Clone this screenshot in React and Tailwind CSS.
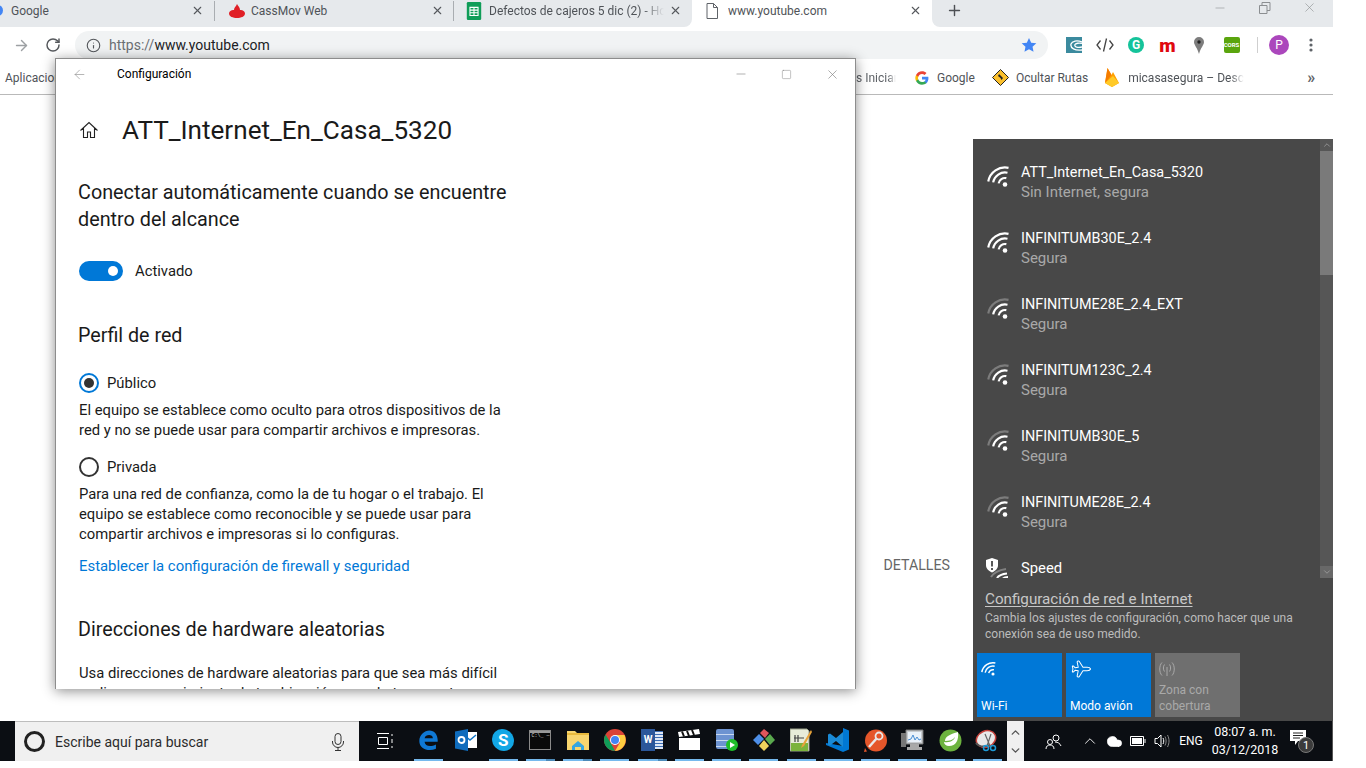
import { ArrowLeft, ChevronDown, ChevronUp, Cloud, Info, Minus, Plane, Plus, RotateCw, Square, X } from 'lucide-react';

const networks = [
  { name: 'ATT_Internet_En_Casa_5320', sub: 'Sin Internet, segura', weak: false },
  { name: 'INFINITUMB30E_2.4', sub: 'Segura', weak: false },
  { name: 'INFINITUME28E_2.4_EXT', sub: 'Segura', weak: true },
  { name: 'INFINITUM123C_2.4', sub: 'Segura', weak: true },
  { name: 'INFINITUMB30E_5', sub: 'Segura', weak: true },
  { name: 'INFINITUME28E_2.4', sub: 'Segura', weak: true },
];

function arc(r, cx, cy) {
  const a0 = (190 * Math.PI) / 180;
  const a1 = (282 * Math.PI) / 180;
  const p = (a) => `${(cx + r * Math.cos(a)).toFixed(2)} ${(cy + r * Math.sin(a)).toFixed(2)}`;
  return `M${p(a0)} A${r} ${r} 0 0 1 ${p(a1)}`;
}

function WifiIcon({ weak, size = 24 }) {
  return (
    <svg width={size} height={size} viewBox="0 0 24 24" fill="none" strokeWidth="2.200" stroke="#fff" className="shrink-0">
      <circle cx="18" cy="19.5" r="2.300" fill="#fff" stroke="none" />
      <path d={arc(6.5, 18, 19.5)} />
      <path d={arc(12, 18, 19.5)} />
      <path d={arc(17, 18, 19.5)} stroke={weak ? '#7c7c7c' : '#fff'} />
    </svg>
  );
}

function SpeedIcon() {
  return (
    <svg width="26" height="24" viewBox="0 0 26 24" fill="none" className="shrink-0">
      <path d="M2 4 L8 2 L14 4 V9 C14 13 11 15 8 16.5 C5 15 2 13 2 9 Z" fill="#fff" />
      <path d="M8 5v5.5M8 12v2" stroke="#484848" strokeWidth="1.8" />
      <path d="M7 21 C10 16 15 14 22 13" stroke="#808080" strokeWidth="2" />
      <path d="M13 22 C15 19 18 18 23 17.5" stroke="#fff" strokeWidth="2" />
      <path d="M19 22.5 C20 21.5 21.5 21 24 21" stroke="#fff" strokeWidth="2" />
    </svg>
  );
}

function ChromeTab({ w, icon, text, close, pl = 14, fade }) {
  return (
    <div className="flex h-full shrink-0 items-center pb-[6px]" style={{ width: w, paddingLeft: pl }}>
      {icon}
      <span className={`min-w-0 flex-1 overflow-hidden whitespace-nowrap text-[12px] text-[#4f5358] ${fade ? 'mr-[5px] [mask-image:linear-gradient(to_right,black_88%,transparent)]' : ''}`}>{text}</span>
      <X size={13} strokeWidth={2} className="shrink-0 text-[#55585c]" style={{ marginRight: close }} />
    </div>
  );
}

function Santander() {
  return (
    <svg width="16" height="14" viewBox="0 0 16 14" className="mr-[6px] shrink-0">
      <path d="M8 0c1 2 3 3.500 3 6 2-.5 5 1 5 3.500 0 3-4 4.500-8 4.500S0 12.500 0 9.500C0 7 3 5.500 5 6c0-2.500 2-3.500 3-6z" fill="#e01f26" />
    </svg>
  );
}

function Sheets() {
  return (
    <svg width="16" height="18" viewBox="0 0 16 20" className="mr-[7px] shrink-0">
      <rect width="16" height="20" rx="1.500" fill="#0f9d58" />
      <path d="M3.500 6h9v9h-9zM3.500 9h9M3.500 12h9M8 6v9" fill="none" stroke="#fff" strokeWidth="1.200" />
    </svg>
  );
}

function PageIcon() {
  return (
    <svg width="12" height="16" viewBox="0 0 12 16" fill="none" stroke="#5f6368" className="mr-[10px] shrink-0">
      <path d="M1 .5h6.500l4 4v11h-10.500zM7.500.5v4h4" />
    </svg>
  );
}

function ExtIcons() {
  return (
    <div className="ml-[10px] flex items-center">
      <div className="flex w-[31px] justify-center">
        <svg width="16" height="16" viewBox="0 0 16 16">
          <rect width="16" height="16" fill="#3b8a9e" />
          <path d="M16 13C9 14 4 11 5 7c1-3 6-4 11-2M16 10C12 11 8 10 9 7.500c.5-1 4-2 7-1" fill="none" stroke="#fff" strokeWidth="1.300" />
        </svg>
      </div>
      <div className="flex w-[31px] justify-center">
        <svg width="18" height="16" viewBox="0 0 18 16" fill="none" stroke="#444" strokeWidth="1.300">
          <path d="M4.500 3.500 1 8l3.500 4.500M13.500 3.500 17 8l-3.500 4.500M10.500 1.500l-3 13" />
        </svg>
      </div>
      <div className="flex w-[32px] justify-center">
        <span className="flex h-[16px] w-[16px] items-center justify-center rounded-full bg-[#15c39a] text-[12px] font-bold leading-none text-white">G</span>
      </div>
      <div className="flex w-[31px] justify-center">
        <span className="text-[19px] font-black leading-none text-[#e0090f]">m</span>
      </div>
      <div className="flex w-[32px] justify-center">
        <svg width="10" height="17" viewBox="0 0 10 17">
          <path d="M5 0a5 5 0 0 1 5 5c0 3-3.500 6-5 12C3.500 11 0 8 0 5a5 5 0 0 1 5-5z" fill="#7d7d7d" />
          <circle cx="5" cy="5" r="1.700" fill="#222" />
        </svg>
      </div>
      <div className="flex w-[33px] justify-center">
        <span className="flex h-[16px] w-[16px] items-center justify-center rounded-[2px] bg-[#5aa50d] text-[6px] font-bold leading-none text-white">CORS</span>
      </div>
      <div className="ml-[9px] h-[16px] w-px bg-[#cfcfcf]" />
      <span className="ml-[11px] flex h-[20px] w-[20px] items-center justify-center rounded-full bg-[#ab47bc] text-[12px] leading-none text-white">P</span>
      <svg width="4" height="14" viewBox="0 0 4 14" fill="#5f6368" className="ml-[20px]">
        <circle cx="2" cy="2" r="1.600" />
        <circle cx="2" cy="7" r="1.600" />
        <circle cx="2" cy="12" r="1.600" />
      </svg>
    </div>
  );
}

function GoogleG() {
  return (
    <svg width="14" height="14" viewBox="0 0 48 48" className="mr-[8px] shrink-0">
      <path fill="#4285F4" d="M46 24.500c0-1.600-.1-3.100-.4-4.500H24v9h12.400c-.5 2.900-2.100 5.300-4.600 7v5.800h7.400C43.600 37.700 46 31.700 46 24.500z" />
      <path fill="#34A853" d="M24 47c6.200 0 11.400-2 15.200-5.500L31.800 35.700c-2 1.400-4.700 2.200-7.800 2.200-6 0-11.100-4-12.900-9.500H3.500v6C7.300 42 15 47 24 47z" />
      <path fill="#FBBC05" d="M11.100 28.400c-.5-1.400-.7-2.900-.7-4.400s.3-3 .7-4.400v-6H3.500C2 16.600 1 20.200 1 24s1 7.400 2.500 10.400z" />
      <path fill="#EA4335" d="M24 10.100c3.400 0 6.400 1.200 8.800 3.400l6.600-6.600C35.400 3.300 30.200 1 24 1 15 1 7.300 6 3.500 13.600l7.600 6c1.800-5.500 6.900-9.500 12.900-9.500z" />
    </svg>
  );
}

function Bookmarks() {
  return (
    <div className="flex h-[34px] items-center border-b border-[#b9b9b9] text-[12px] text-[#4f5358]">
      <span className="w-[856px] shrink-0 pl-[5px]">Aplicaciones</span>
      <span className="w-[40px] shrink-0 overflow-hidden whitespace-nowrap text-[#5f6368] [mask-image:linear-gradient(to_right,black_80%,transparent)]">s Iniciar</span>
      <div className="ml-[19px] flex items-center">
        <GoogleG />
        <span>Google</span>
      </div>
      <div className="ml-[17px] flex items-center">
        <svg width="17" height="17" viewBox="0 0 17 17" className="mr-[7px] shrink-0">
          <path d="M8.500.5l8 8-8 8-8-8z" fill="#fbc02d" stroke="#222" />
          <path d="M7 5l4 4-1.500 2-1-2L6 7z" fill="#222" />
        </svg>
        <span>Ocultar Rutas</span>
      </div>
      <div className="ml-[17px] flex items-center">
        <svg width="14" height="19" viewBox="0 0 14 19" className="mr-[9px] shrink-0">
          <path d="M0 15 2.500 0l4 7L8 4l6 11-7 4z" fill="#ffa000" />
          <path d="M0 15 2.500 0l4 7z" fill="#f57c00" />
          <path d="M14 15l-7 4-7-4 8-7z" fill="#ffca28" />
        </svg>
        <span className="w-[116px] overflow-hidden whitespace-nowrap [mask-image:linear-gradient(to_right,black_88%,transparent)]">micasasegura – Descripción</span>
      </div>
      <span className="ml-[63px] text-[16px] font-bold leading-none text-[#5f6368]">»</span>
    </div>
  );
}

function Browser() {
  return (
    <div className="w-[1333px]">
      <div className="flex h-[27px] bg-white">
        <div className="relative flex h-full rounded-br-[8px] bg-[#e6e9ec]">
          <span className="absolute left-[-8px] top-[5px] h-[11px] w-[11px] rounded-full bg-[#4285f4]" />
          <ChromeTab w={214} pl={11} text="Google" close={10} />
          <div className="mb-[6px] mt-[1px] w-px bg-[#a9adb1]" />
          <ChromeTab w={238} icon={<Santander />} text="CassMov Web" close={9} />
          <div className="mb-[6px] mt-[1px] w-px bg-[#a9adb1]" />
          <ChromeTab w={238} pl={12} icon={<Sheets />} text="Defectos de cajeros 5 dic (2) - Hoja" close={10} fade />
        </div>
        <ChromeTab w={240} icon={<PageIcon />} text="www.youtube.com" close={10} />
        <div className="flex flex-1 items-center rounded-bl-[8px] bg-[#e6e9ec]">
          <Plus size={17} strokeWidth={2} className="mb-[6px] ml-[14px] text-[#4d5054]" />
          <div className="mb-[12px] ml-[250px] flex items-center text-[#8b8e91]">
            <Minus size={14} strokeWidth={1} />
            <svg width="12" height="12" viewBox="0 0 12 12" fill="none" stroke="#8b8e91" className="ml-[32px]">
              <path d="M.5 3.500h7.500v8h-7.500zM3 3.500V.500h8v8h-3" />
            </svg>
            <X size={15} strokeWidth={1} className="ml-[31px]" />
          </div>
        </div>
      </div>

      <div className="flex h-[34px] items-center bg-white pt-[2px]">
        <ArrowLeft size={17} strokeWidth={2} className="ml-[13px] rotate-180 text-[#9da0a3]" />
        <RotateCw size={16} strokeWidth={2.200} className="ml-[15px] text-[#55585c]" />
        <div className="ml-[14px] flex h-[28px] w-[973px] items-center rounded-full bg-[#f1f3f4]">
          <Info size={15} strokeWidth={1.800} className="ml-[11px] text-[#55585c]" />
          <span className="ml-[8px] flex-1 text-[14px] text-[#202124]"><span className="text-[#6b6f73]">https://</span>www.youtube.com</span>
          <svg width="16" height="16" viewBox="0 0 24 24" fill="#4285f4" className="mr-[11px]">
            <path d="M12 1.500l3.300 7 7.700.9-5.700 5.200 1.500 7.600L12 18.400l-6.800 3.800 1.500-7.600L1 9.400l7.700-.9z" />
          </svg>
        </div>
        <ExtIcons />
      </div>

      <Bookmarks />
    </div>
  );
}

function HomeIcon() {
  return (
    <svg width="20" height="20" viewBox="0 0 20 20" fill="none" stroke="#222" strokeWidth="1.100" className="shrink-0">
      <path d="M1.500 10.500 10 2.500l8.500 8M4.500 8v9.500h4v-5.500h3v5.500h4V8" />
    </svg>
  );
}

function Radio({ on }) {
  return (
    <span className={`flex h-[20px] w-[20px] items-center justify-center rounded-full border-2 ${on ? 'border-[#0078d7]' : 'border-[#333]'}`}>
      {on && <span className="h-[10px] w-[10px] rounded-full bg-[#333]" />}
    </span>
  );
}

function SettingsWindow() {
  return (
    <div className="absolute left-[55px] top-[58px] h-[631px] w-[801px] overflow-hidden border border-b-0 border-[#8d8d8d] bg-white text-[#1a1a1a] shadow-[0_2px_12px_rgba(0,0,0,0.45)]">
      <div className="flex h-[30px] items-center text-[12px]">
        <ArrowLeft size={15} strokeWidth={1} className="ml-[16px] text-[#8a8a8a]" />
        <span className="ml-[30px] text-black">Configuración</span>
        <div className="ml-auto flex items-center text-[#7a7a7a]">
          <Minus size={14} strokeWidth={1} />
          <Square size={11} strokeWidth={1} className="ml-[33px]" />
          <X size={15} strokeWidth={1} className="ml-[33px] mr-[15px]" />
        </div>
      </div>

      <div className="ml-[23px] mt-[23px] flex h-[36px] items-center">
        <HomeIcon />
        <h1 className="ml-[23px] text-[26.100px] leading-[36px] text-[#1a1a1a]">ATT_Internet_En_Casa_5320</h1>
      </div>

      <h2 className="ml-[22px] mt-[31px] w-[450px] text-[19.800px] leading-[27px]">Conectar automáticamente cuando se encuentre dentro del alcance</h2>

      <div className="ml-[23px] mt-[28px] flex h-[20px] items-center">
        <span className="flex h-[20px] w-[44px] items-center justify-end rounded-full bg-[#0078d7] pr-[5px]">
          <span className="h-[10px] w-[10px] rounded-full bg-white" />
        </span>
        <span className="ml-[12px] pt-[1px] text-[14.800px]">Activado</span>
      </div>

      <h2 className="ml-[22px] mt-[41px] text-[19.700px] leading-[27px]">Perfil de red</h2>

      <div className="ml-[23px] mt-[24px] flex h-[20px] items-center">
        <Radio on />
        <span className="ml-[8px] pt-[1px] text-[14.800px]">Público</span>
      </div>
      <p className="ml-[23px] mt-[7px] w-[440px] text-[14.800px] leading-[20px]">El equipo se establece como oculto para otros dispositivos de la red y no se puede usar para compartir archivos e impresoras.</p>

      <div className="ml-[23px] mt-[17px] flex h-[20px] items-center">
        <Radio />
        <span className="ml-[8px] pt-[1px] text-[14.800px]">Privada</span>
      </div>
      <p className="ml-[23px] mt-[7px] w-[440px] text-[14.800px] leading-[20px]">Para una red de confianza, como la de tu hogar o el trabajo. El equipo se establece como reconocible y se puede usar para compartir archivos e impresoras si lo configuras.</p>

      <p className="ml-[23px] mt-[12px] text-[14.900px] leading-[20px] text-[#0078d7]">Establecer la configuración de firewall y seguridad</p>

      <h2 className="ml-[22px] mt-[40px] text-[19.700px] leading-[27px]">Direcciones de hardware aleatorias</h2>

      <p className="ml-[23px] mt-[20px] w-[440px] text-[14.800px] leading-[20px]">Usa direcciones de hardware aleatorias para que sea más difícil realizar un seguimiento de tu ubicación cuando te conectas a diferentes redes Wi-Fi.</p>
    </div>
  );
}

function Tile({ label, icon, off }) {
  return (
    <div className={`flex h-[64px] w-[85px] flex-col px-[4px] pb-[3px] pt-[6px] ${off ? 'bg-[#6f6f6f] text-[#a9a9a9]' : 'bg-[#0078d7] text-white'}`}>
      <div className="flex h-[20px] items-center">{icon}</div>
      <span className="mt-auto text-[12px] leading-[16px]">{label}</span>
    </div>
  );
}

function NetworkFlyout() {
  return (
    <div className="absolute left-[973px] top-[139px] flex h-[582px] w-[360px] flex-col bg-[#484848] text-white">
      <div className="flex h-[439px] shrink-0 overflow-hidden">
        <div className="flex-1 pt-[10px]">
          {networks.map((n) => (
            <div key={n.name} className="flex h-[66px] pl-[14px] pt-[13px]">
              <div className="mr-[10px] pt-[3px]"><WifiIcon weak={n.weak} /></div>
              <div>
                <p className="h-[20px] text-[14.400px] leading-[22px]">{n.name}</p>
                <p className="text-[15px] leading-[20px] text-[#a8a8a8]">{n.sub}</p>
              </div>
            </div>
          ))}
          <div className="flex h-[66px] pl-[11px] pt-[11px]">
            <div className="mr-[11px]"><SpeedIcon /></div>
            <p className="pt-[2px] text-[14.800px] leading-[20px]">Speed</p>
          </div>
        </div>
        <div className="flex w-[13px] shrink-0 flex-col bg-[#565656]">
          <div className="flex h-[12px] items-center justify-center"><ChevronUp size={10} strokeWidth={1.500} className="text-[#b0b0b0]" /></div>
          <div className="h-[124px] bg-[#7a7a7a]" />
          <div className="mt-auto flex h-[12px] items-center justify-center bg-[#686868]"><ChevronDown size={10} strokeWidth={1.500} className="text-[#b0b0b0]" /></div>
        </div>
      </div>

      <p className="ml-[12px] mt-[11px] text-[15.200px] leading-[20px] text-[#c8c8c8] underline underline-offset-2">Configuración de red e Internet</p>
      <p className="ml-[12px] mt-[1px] w-[330px] text-[12px] leading-[16px] text-[#bcbcbc]">Cambia los ajustes de configuración, como hacer que una conexión sea de uso medido.</p>

      <div className="ml-[4px] mt-[11px] flex gap-[4px]">
        <Tile label="Wi-Fi" icon={<WifiIcon size={16} />} />
        <Tile
          label="Modo avión"
          icon={<Plane size={20} strokeWidth={1.200} className="rotate-45" />}
        />
        <Tile
          off
          label={<>Zona con<br />cobertura</>}
          icon={
            <svg width="16" height="14" viewBox="0 0 16 14" fill="none" stroke="#a9a9a9">
              <path d="M8 5v9M5.500 2.500c-1.500 2-1.500 5 0 7M10.500 2.500c1.500 2 1.500 5 0 7M3 .5c-3 3-3 10 0 13M13 .5c3 3 3 10 0 13" />
            </svg>
          }
        />
      </div>
    </div>
  );
}

const taskIcons = [
  {
    bar: true,
    svg: (
      <svg width="21" height="22" viewBox="0 0 24 24">
        <path fillRule="evenodd" d="M22.500 14H7.500c.3 5 7 6.500 13 3v5c-9 3.500-19 0-19-9C1.500 6 7.500 1 13 1c6 0 10 5 9.500 13zM7.500 10H17c0-5-8.500-5-9.500 0z" fill="#0f78d4" />
      </svg>
    ),
  },
  {
    svg: (
      <div className="relative h-[22px] w-[22px]">
        <div className="absolute inset-y-[3px] right-0 w-[14px] bg-white" />
        <svg width="22" height="22" viewBox="0 0 22 22" className="absolute inset-0">
          <path d="M9 6l6 5 6-5" fill="none" stroke="#1075c8" strokeWidth="1.500" />
          <path d="M0 2.500 13 0v22L0 19.500z" fill="#0f6cbd" />
          <circle cx="6.500" cy="11" r="3" fill="none" stroke="#fff" strokeWidth="1.800" />
        </svg>
      </div>
    ),
  },
  {
    bar: true,
    svg: (
      <span className="flex h-[22px] w-[22px] items-center justify-center rounded-[45%_55%_45%_55%] bg-[#12a7e6] text-[17px] font-bold leading-none text-white">S</span>
    ),
  },
  {
    bar: true,
    split: true,
    svg: (
      <div className="h-[20px] w-[22px] border border-[#8a8a8a] bg-[#0a0a0a]">
        <div className="h-[2px] bg-[#9a9a9a]" />
        <p className="pl-[1px] font-[Liberation_Mono,monospace] text-[5px] leading-[7px] text-[#ddd]">C:\_ —</p>
      </div>
    ),
  },
  {
    bar: true,
    split: true,
    svg: (
      <svg width="22" height="20" viewBox="0 0 22 20">
        <path d="M0 1h8l2 2h12v17H0z" fill="#f8d56e" />
        <path d="M0 3h22v2H0z" fill="#e8b93d" />
        <path d="M5 16l6-5 6 5v4h-3v-3H8v3H5z" fill="#35a5e0" />
      </svg>
    ),
  },
  {
    bar: true,
    svg: (
      <svg width="22" height="22" viewBox="0 0 22 22">
        <circle cx="11" cy="11" r="11" fill="#db4437" />
        <path d="M11 22A11 11 0 0 1 1.500 5.500L7 14.500z" fill="#0f9d58" />
        <path d="M11 6h9.500A11 11 0 0 1 11 22l5-8.500z" fill="#ffcd40" />
        <circle cx="11" cy="11" r="5" fill="#fff" />
        <circle cx="11" cy="11" r="4" fill="#4285f4" />
      </svg>
    ),
  },
  {
    bar: true,
    split: true,
    svg: (
      <div className="relative h-[22px] w-[22px]">
        <div className="absolute inset-y-[2px] right-0 w-[14px] bg-[#dfe8f5] [background-image:repeating-linear-gradient(to_bottom,#3b6cb4_0_1px,transparent_1px_3px)]" />
        <div className="absolute inset-y-0 left-0 flex w-[14px] items-center justify-center bg-[#2b579a] text-[10px] font-bold leading-none text-white">W</div>
      </div>
    ),
  },
  {
    bar: true,
    svg: (
      <svg width="22" height="22" viewBox="0 0 22 22">
        <path d="M1 9h21v12H1z" fill="#fff" />
        <path d="M0 3l21-3 1 5L1 8z" fill="#fff" />
        <path d="M4 2.500l2 5M9 2l2 5M14 1l2 5" stroke="#111" strokeWidth="2" />
      </svg>
    ),
  },
  {
    bar: true,
    svg: (
      <div className="relative h-[22px] w-[22px]">
        <div className="h-[20px] w-[18px] rounded-[2px] bg-[#6d93d1] [background-image:repeating-linear-gradient(to_bottom,transparent_0_5px,#c8d8f0_5px_6px)]" />
        <span className="absolute bottom-0 right-0 flex h-[12px] w-[12px] items-center justify-center rounded-full bg-[#1fbf2a]">
          <span className="ml-[1px] h-0 w-0 border-y-[3px] border-l-[5px] border-y-transparent border-l-white" />
        </span>
      </div>
    ),
  },
  {
    bar: true,
    svg: (
      <svg width="24" height="24" viewBox="0 0 24 24">
        <path d="M1 12l6-6 5 5-6 6z" fill="#4e8fe8" />
        <path d="M8 5l4-4 5 4-4 5z" fill="#e0565b" />
        <path d="M13 11l5-5 5 6-5 5z" fill="#5aa94e" />
        <path d="M7 18l5-6 5 6-5 5z" fill="#f0d45c" />
      </svg>
    ),
  },
  {
    bar: true,
    svg: (
      <svg width="22" height="24" viewBox="0 0 22 24">
        <path d="M0 1h17l2 2v20H0z" fill="#e8ecd9" stroke="#9aa08a" />
        <path d="M1 15h17v8H1z" fill="#7bb33c" />
        <path d="M5 7v7M8 7v7M4 10h10" stroke="#444" strokeWidth="1.200" />
        <path d="M21 2 12 17l-1 3 3-2 8-14z" fill="#e8a33a" />
      </svg>
    ),
  },
  {
    bar: true,
    svg: (
      <svg width="24" height="24" viewBox="0 0 24 24">
        <path d="M17 0l6 2.500v19L17 24 0 17v-2l17 3V0z" fill="#0078d4" />
        <path d="M17 4 10 10 4 5.500 2 6.500v10l2 1 6-4.500 7 6zM5 9v5l3-2.500z" fill="#1a8ad6" />
      </svg>
    ),
  },
  {
    bar: true,
    svg: (
      <svg width="23" height="23" viewBox="0 0 23 23">
        <circle cx="12" cy="11.500" r="11" fill="#e5562a" />
        <path d="M5 18 13 9" stroke="#e9e9e9" strokeWidth="2.500" />
        <circle cx="15" cy="7" r="3.500" fill="none" stroke="#e9e9e9" strokeWidth="1.800" />
        <path d="M0 23l3-.5L1 19z" fill="#e5562a" />
      </svg>
    ),
  },
  {
    bar: true,
    svg: (
      <svg width="24" height="23" viewBox="0 0 24 23">
        <path d="M5 1h17v14H5z" fill="#c8ccd0" stroke="#777" />
        <path d="M7 3h13v10H7z" fill="#eaf2fa" />
        <path d="M7 11l3-1 2-4 2 5 2-3 2 3 2-1" fill="none" stroke="#4a8fd4" />
        <path d="M0 4h5v14H0z" fill="#777" />
        <path d="M9 15h9v3H9zM6 18h15v3H6z" fill="#a9a9a9" />
      </svg>
    ),
  },
  {
    bar: true,
    svg: (
      <svg width="23" height="23" viewBox="0 0 23 23">
        <circle cx="11.500" cy="11.500" r="11" fill="#6db33f" />
        <path d="M19 3c1 8-2 14-9 14-3 0-5-2-5-4 7 1 10-2 11-5-2 3-6 4-10 4 0-5 6-7 13-9z" fill="#fff" />
      </svg>
    ),
  },
  {
    bar: true,
    svg: (
      <svg width="25" height="23" viewBox="0 0 25 23">
        <ellipse cx="11" cy="10" rx="10" ry="8" fill="#e9e9e9" stroke="#c8423c" strokeWidth="1.500" transform="rotate(-25 11 10)" />
        <path d="M1 14c3 4 9 4 14 2" stroke="#555" strokeWidth="2" fill="none" />
        <path d="M10 5l5 12M16 5l-4 12" stroke="#666" strokeWidth="1.200" />
        <circle cx="11" cy="19" r="2.500" fill="none" stroke="#1e9bd7" strokeWidth="1.500" />
        <circle cx="18" cy="19" r="2.500" fill="none" stroke="#1e9bd7" strokeWidth="1.500" />
      </svg>
    ),
  },
];

function Taskbar() {
  return (
    <div className="flex h-[40px] w-[1333px] bg-[#0b0e13] text-white">
      <div className="w-[15px] shrink-0" />
      <div className="flex w-[344px] shrink-0 items-center border-t border-[#bdbdbd] bg-[#f0f0f0] text-[#2b2b2b]">
        <span className="ml-[9px] h-[21px] w-[21px] rounded-full border-[3px] border-[#222]" />
        <span className="ml-[10px] flex-1 pt-[1px] text-[14px]">Escribe aquí para buscar</span>
        <svg width="12" height="18" viewBox="0 0 12 18" fill="none" stroke="#333" className="mr-[15px]">
          <rect x="3" y=".5" width="6" height="11" rx="3" />
          <path d="M.5 8v1a5.500 5.500 0 0 0 11 0V8M6 14.500v3M3 17.500h6" />
        </svg>
      </div>
      <div className="flex w-[51px] shrink-0 items-center justify-center">
        <svg width="16" height="16" viewBox="0 0 16 16" fill="none" stroke="#fff">
          <path d="M0 .5h12M1.500 4.500h9v7h-9zM0 15.500h12M15 1v2M15 6v4M15 13v2" />
        </svg>
      </div>
      <div className="grid w-[596px] shrink-0 grid-cols-16">
        {taskIcons.map((t, i) => (
          <div key={i} className="relative flex items-center justify-center pb-[2px]">
            {t.svg}
            {t.bar && (
              <span className={`absolute bottom-0 left-[4px] h-[2px] w-[29px] ${t.split ? 'bg-[linear-gradient(to_right,#76b9ed_70%,#4d8ab8_70%)]' : 'bg-[#76b9ed]'}`} />
            )}
          </div>
        ))}
      </div>
      <div className="ml-[1px] flex w-[17px] shrink-0 flex-col items-center justify-around bg-[#f0f0f0] py-[2px] text-[#555]">
        <ChevronUp size={13} strokeWidth={2.500} />
        <ChevronDown size={13} strokeWidth={2.500} />
      </div>

      <div className="flex flex-1 items-center border-r border-[#555] pr-[4px]">
        <div className="ml-[17px] flex w-[24px] justify-center">
          <svg width="17" height="17" viewBox="0 0 17 17" fill="none" stroke="#fff">
            <circle cx="11" cy="5" r="3" />
            <circle cx="5" cy="9" r="2.500" />
            <path d="M1 16c0-3 2-4 4-4s4 1 4 4M10 9c3 0 5 1.500 6 4" />
          </svg>
        </div>
        <div className="ml-[13px] flex w-[24px] justify-center"><ChevronUp size={18} strokeWidth={1.200} /></div>
        <div className="flex w-[24px] justify-center"><Cloud size={17} fill="#fff" strokeWidth={1} /></div>
        <div className="flex w-[24px] justify-center">
          <svg width="16" height="10" viewBox="0 0 16 10" fill="none" stroke="#fff">
            <path d="M.5.500h13v9h-13z" />
            <path d="M2 2h10v6H2z" fill="#fff" stroke="none" />
            <path d="M15 3v4" />
          </svg>
        </div>
        <div className="flex w-[24px] justify-center">
          <svg width="16" height="16" viewBox="0 0 16 16" fill="none" stroke="#fff">
            <path d="M1 5.500h2.500L7 2v12l-3.500-3.500H1zM9 5c1 2 1 4 0 6" />
            <path d="M11 3.500c1.500 3 1.500 6 0 9M13.500 2c2 4 2 8 0 12" stroke="#888" />
          </svg>
        </div>
        <span className="w-[34px] text-center text-[12px]">ENG</span>
        <div className="w-[74px] text-center text-[12.500px] leading-[18px]">
          <p>08:07 a. m.</p>
          <p>03/12/2018</p>
        </div>
        <div className="relative ml-[8px] h-[24px] w-[24px]">
          <svg width="16" height="15" viewBox="0 0 16 15" className="absolute left-0 top-[1px]">
            <path d="M0 0h16v11H8l-3 4v-4H0z" fill="#fff" />
            <path d="M3 3h10M3 5.500h10M3 8h7" stroke="#222" />
          </svg>
          <span className="absolute bottom-0 right-0 flex h-[16px] w-[16px] items-center justify-center rounded-full border border-[#777] bg-[#3b3b3b] text-[11px] leading-none">1</span>
        </div>
      </div>
    </div>
  );
}

export default function App() {
  return (
    <div className="relative flex h-[768px] w-[1366px] flex-col overflow-hidden bg-white font-[Roboto,sans-serif]">
      <Browser />
      <div className="flex h-[626px] w-[1333px] items-start justify-end">
        <span className="mr-[383px] mt-[460px] text-[14.200px] leading-[20px] text-[#666]">DETALLES</span>
      </div>
      <Taskbar />
      <SettingsWindow />
      <NetworkFlyout />
    </div>
  );
}
